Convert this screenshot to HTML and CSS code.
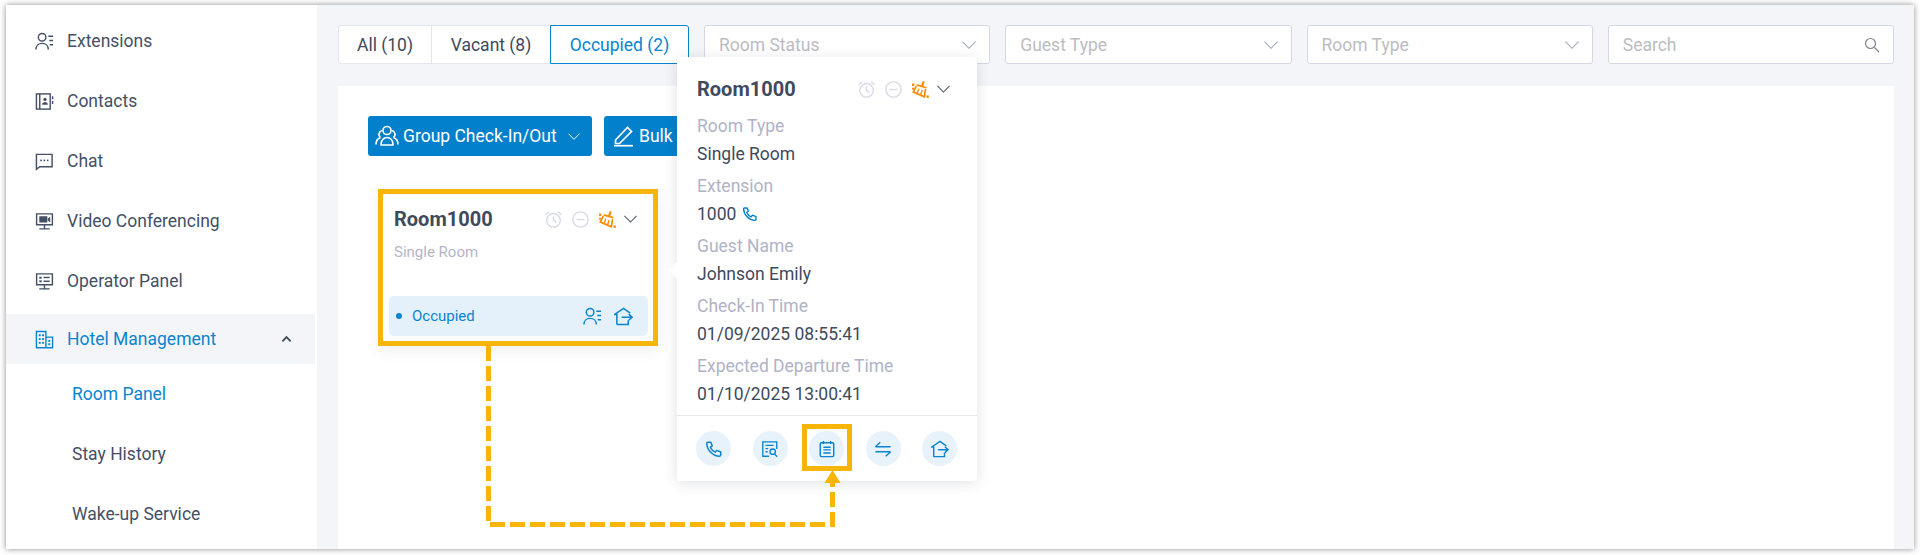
FILE: index.html
```html
<!DOCTYPE html>
<html lang="en">
<head>
<meta charset="utf-8">
<title>Room Panel</title>
<link rel="stylesheet" href="styles.css">
</head>
<body>
<svg class="defs" width="0" height="0" aria-hidden="true">
  <defs>
    <symbol id="i-person" viewBox="0 0 20 20"><g fill="none" stroke="currentColor" stroke-width="1.5"><circle cx="7.500" cy="5.500" r="4"/><path d="M1 18.500c0-4 2.800-6.500 6.500-6.500s6.500 2.500 6.500 6.500"/><path d="M14 4.500h5M15 9h4M15.500 13.500h3.500"/></g></symbol>
    <symbol id="i-logout" viewBox="0 0 20 20"><g fill="none" stroke="currentColor" stroke-width="1.600"><path d="M3 18.500V7.800H.8L10 1.500l7 5"/><path d="M3 18.500h12V14"/><path d="M8 10.800h11M15.500 7.500 19 10.800 15.500 14"/></g></symbol>
    <symbol id="i-phone" viewBox="0 0 20 20"><path fill="none" stroke="currentColor" stroke-width="1.700" stroke-linejoin="round" d="M3 2.500h3.500l1.500 4-2 1.500c1 2.500 3 4.500 5.500 5.500l1.500-2 4.500 1.800v3.200c0 .8-.6 1.500-1.500 1.500C9 18 2 11 2 3.500c0-.5.400-1 1-1z"/></symbol>
    <symbol id="i-alarm" viewBox="0 0 20 20"><g fill="none" stroke="currentColor" stroke-width="1.700"><circle cx="10" cy="11" r="8"/><path d="M10 6.500V11l3.500 2.500M.8 4.500 4.500 1M19.200 4.500 15.500 1"/></g></symbol>
    <symbol id="i-minus" viewBox="0 0 20 20"><g fill="none" stroke="currentColor" stroke-width="1.700"><circle cx="10" cy="10" r="9"/><path d="M5.500 10h9"/></g></symbol>
    <symbol id="i-broom" viewBox="0 0 20 20"><g fill="none" stroke="currentColor"><path stroke-width="2.600" d="M13.800.5 11.800 6"/><path stroke-width="2" d="M5.500 4.500 17 8M5 6 1.500 13l13 5.500L16 9.500"/><path stroke-width="1.600" d="M8 9 6 15M12 10.500l-2 6"/></g><g fill="currentColor"><rect x="0" y="3" width="2.800" height="2.800"/><rect x="0" y="8" width="2.200" height="2.200"/><rect x="17" y="17" width="2.800" height="2.800"/></g></symbol>
    <symbol id="i-chev" viewBox="0 0 14 8"><path fill="none" stroke="currentColor" stroke-width="1.100" d="M.5.700 7 7.300 13.500.7"/></symbol>
  </defs>
</svg>

<div class="frame">
  <nav class="sidebar">
    <a class="nav-item">
      <svg class="nav-icon"><use href="#i-person"/></svg><span>Extensions</span>
    </a>
    <a class="nav-item">
      <svg class="nav-icon" viewBox="0 0 20 20"><g fill="none" stroke="currentColor" stroke-width="1.500"><rect x="1.500" y="2" width="14.500" height="16"/><path d="M5 2v16"/><path d="M18.500 4.500v3M18.500 9.500v3"/></g><circle cx="10.500" cy="7.800" r="1.700" fill="currentColor"/><path fill="currentColor" d="M7.500 13.500c0-2 1.300-3 3-3s3 1 3 3z"/></svg><span>Contacts</span>
    </a>
    <a class="nav-item">
      <svg class="nav-icon" viewBox="0 0 20 20"><path fill="none" stroke="currentColor" stroke-width="1.500" d="M1.500 2.500h16.500v13H5l-3.500 2.800z"/><g fill="currentColor"><rect x="5.500" y="8" width="1.700" height="1.700"/><rect x="9" y="8" width="1.700" height="1.700"/><rect x="12.500" y="8" width="1.700" height="1.700"/></g></svg><span>Chat</span>
    </a>
    <a class="nav-item">
      <svg class="nav-icon" viewBox="0 0 20 20"><path fill="none" stroke="currentColor" stroke-width="1.500" d="M1.700 2h16.600v11.500H1.700zM10 13.500V17M4.500 17.800h11"/><path fill="currentColor" d="M4.500 4.500h8.500v6.500H4.500zM13.500 7l2.500-2v6l-2.500-2z"/></svg><span>Video Conferencing</span>
    </a>
    <a class="nav-item">
      <svg class="nav-icon" viewBox="0 0 20 20"><path fill="none" stroke="currentColor" stroke-width="1.500" d="M1.700 2h16.600v11.500H1.700zM10 13.500V17M4.500 17.800h11"/><g fill="currentColor"><rect x="4.500" y="5" width="2.500" height="2"/><rect x="9" y="5" width="6.500" height="1.500"/><rect x="4.500" y="8.800" width="2.500" height="2"/><rect x="9" y="9" width="6.500" height="1.500"/></g></svg><span>Operator Panel</span>
    </a>
    <a class="nav-item nav-active">
      <svg class="nav-icon" viewBox="0 0 20 20"><g fill="none" stroke="currentColor" stroke-width="1.500"><path d="M1.500 18.500V1.500h10v17M1 18.700h18M11.500 7.500h7v11.200"/></g><g fill="currentColor"><rect x="4" y="4.500" width="2" height="2"/><rect x="7.500" y="4.500" width="2" height="2"/><rect x="4" y="8.500" width="2" height="2"/><rect x="7.500" y="8.500" width="2" height="2"/><rect x="4" y="12.500" width="2" height="2"/><rect x="7.500" y="12.500" width="2" height="2"/><rect x="14" y="10.500" width="2" height="2"/><rect x="14" y="14" width="2" height="2"/></g></svg><span class="nav-label">Hotel Management</span>
      <svg class="nav-caret" viewBox="0 0 12 8"><path fill="none" stroke="currentColor" stroke-width="2" d="M1.500 6.500 6 2l4.500 4.500"/></svg>
    </a>
    <a class="nav-sub nav-sub-active">Room Panel</a>
    <a class="nav-sub">Stay History</a>
    <a class="nav-sub">Wake-up Service</a>
  </nav>

  <main class="content">
    <div class="toolbar">
      <div class="tabs">
        <span class="tab tab-all">All (10)</span>
        <span class="tab tab-vacant">Vacant (8)</span>
        <span class="tab tab-occ">Occupied (2)</span>
      </div>
      <div class="field"><span>Room Status</span><svg class="field-chev"><use href="#i-chev"/></svg></div>
      <div class="field"><span>Guest Type</span><svg class="field-chev"><use href="#i-chev"/></svg></div>
      <div class="field"><span>Room Type</span><svg class="field-chev"><use href="#i-chev"/></svg></div>
      <div class="field"><span>Search</span>
        <svg class="field-search" viewBox="0 0 16 16"><g fill="none" stroke="currentColor" stroke-width="1.200"><circle cx="6.500" cy="6.500" r="5"/><path d="m10.500 10.500 4.500 4.500"/></g></svg>
      </div>
    </div>

    <section class="panel">
      <div class="actions">
        <button class="btn btn-group">
          <svg class="btn-icon" viewBox="0 0 24 22"><g fill="none" stroke="currentColor" stroke-width="1.600"><circle cx="12" cy="5.500" r="4"/><path d="M5.500 12c-2.500-1-2-5.500 1.500-6.500M18.500 12c2.500-1 2-5.500-1.500-6.500"/><path d="M1 19.500c0-3.500 1.800-6 4.500-7M23 19.500c0-3.500-1.800-6-4.500-7"/><path d="M6 20c0-4.500 2.500-7.500 6-7.500s6 3 6 7.500z"/></g></svg>
          <span>Group Check-In/Out</span>
          <svg class="btn-chev"><use href="#i-chev"/></svg>
        </button>
        <button class="btn btn-bulk">
          <svg class="btn-icon" viewBox="0 0 22 22"><g fill="none" stroke="currentColor" stroke-width="1.700"><path d="M2.500 15 14.500 2.500l4 4L6.500 18.500h-4z"/><path d="M1 20.700h19"/></g></svg>
          <span>Bulk Edit</span>
        </button>
      </div>

      <article class="card">
        <header class="room-head">
          <h2 class="room-name">Room1000</h2>
          <svg class="st st-off"><use href="#i-alarm"/></svg>
          <svg class="st st-off"><use href="#i-minus"/></svg>
          <svg class="st st-clean"><use href="#i-broom"/></svg>
          <svg class="st-chev"><use href="#i-chev"/></svg>
        </header>
        <p class="room-type">Single Room</p>
        <div class="status">
          <i class="dot"></i><span class="status-text">Occupied</span>
          <svg class="status-icon"><use href="#i-person"/></svg>
          <svg class="status-icon"><use href="#i-logout"/></svg>
        </div>
      </article>
    </section>
  </main>

  <aside class="popover">
    <header class="room-head pop-head">
      <h2 class="room-name">Room1000</h2>
      <svg class="st st-off"><use href="#i-alarm"/></svg>
      <svg class="st st-off"><use href="#i-minus"/></svg>
      <svg class="st st-clean"><use href="#i-broom"/></svg>
      <svg class="st-chev"><use href="#i-chev"/></svg>
    </header>
    <dl class="facts">
      <dt>Room Type</dt><dd>Single Room</dd>
      <dt>Extension</dt><dd>1000 <svg class="ext-phone"><use href="#i-phone"/></svg></dd>
      <dt>Guest Name</dt><dd>Johnson Emily</dd>
      <dt>Check-In Time</dt><dd>01/09/2025 08:55:41</dd>
      <dt>Expected Departure Time</dt><dd>01/10/2025 13:00:41</dd>
    </dl>
    <footer class="pop-actions">
      <span class="round"><svg class="round-icon"><use href="#i-phone"/></svg></span>
      <span class="round"><svg class="round-icon" viewBox="0 0 20 20"><g fill="none" stroke="currentColor" stroke-width="1.500"><path d="M9 18H2V2h15.500v8"/><path d="M5 6h9M5 9.500h3M5 13h2.500"/><circle cx="13" cy="13" r="3"/><path d="m15 15.500 3 3"/></g></svg></span>
      <span class="round"><svg class="round-icon" viewBox="0 0 20 20"><g fill="none" stroke="currentColor" stroke-width="1.600"><rect x="2.500" y="3" width="15" height="15.500" rx="1.500"/><path d="M6 1v3.500M14 1v3.500M6 8h8M6 11h8M6 14.500h8"/></g></svg></span>
      <span class="round"><svg class="round-icon" viewBox="0 0 20 20"><g fill="none" stroke="currentColor" stroke-width="1.500"><path d="M1.500 7.500h17M1.500 7.500 7 2.500M18.500 13h-17M18.500 13 13 18"/></g></svg></span>
      <span class="round"><svg class="round-icon"><use href="#i-logout"/></svg></span>
    </footer>
  </aside>

  <svg class="annot" width="1908" height="544" viewBox="0 0 1908 544" aria-hidden="true">
    <path class="annot-dash" d="M482.500 341V519.500H826.500V476"/>
    <path class="annot-head" d="M826.500 465l8 13h-16z"/>
    <rect class="annot-box" x="798.500" y="421.500" width="45" height="42"/>
  </svg>
</div>
</body>
</html>
```

FILE: styles.css
```css
* { box-sizing: border-box; }
html, body { margin: 0; height: 100%; }
body { background: #fff; font-family: Roboto, "Liberation Sans", sans-serif; color: #3f4a5c; overflow: hidden; }
.defs { display: block; height: 0; }
button { font: inherit; }
h2, p, dl, dd { margin: 0; }

.frame { position: relative; display: flex; width: 1908px; height: 544px; margin: 5px 0 0 6px; box-shadow: 0 0 6px rgba(0, 0, 0, .45); background: #f4f5f8; }

.sidebar { width: 311px; flex: none; background: #fff; padding: 6px 2px 0 0; display: flex; flex-direction: column; }
.nav-item { display: flex; align-items: center; height: 60px; padding-left: 29px; font-size: 17.500px; color: #445066; }
.nav-icon { width: 19px; height: 19px; margin-right: 13px; flex: none; }
.nav-active { height: 50px; margin-top: 3px; background: #f4f5f8; color: #0a84d0; }
.nav-label { flex: 1; }
.nav-caret { width: 11px; height: 8px; margin-right: 23px; color: #3f4a5c; }
.nav-sub { display: flex; align-items: center; height: 60px; padding-left: 66px; font-size: 17.500px; color: #445066; }
.nav-sub-active { color: #0a84d0; }

.content { flex: 1; min-width: 0; padding: 20px 20px 0 21px; display: flex; flex-direction: column; }
.toolbar { display: flex; height: 39px; gap: 15px; flex: none; }
.tabs { display: flex; width: 351px; flex: none; background: #fff; border-radius: 3px; font-size: 17.500px; }
.tab { display: flex; align-items: center; justify-content: center; border: 1px solid #e3e6ee; }
.tab-all { width: 93px; border-radius: 3px 0 0 3px; border-right: 0; }
.tab-vacant { width: 119px; border-right: 0; }
.tab-occ { width: 139px; border: 1px solid #0a84d0; color: #0a84d0; border-radius: 0 3px 3px 0; }
.field { flex: 1; min-width: 0; display: flex; align-items: center; justify-content: space-between; padding: 0 13px 0 14px; background: #fff; border: 1px solid #d5d8e4; border-radius: 3px; font-size: 17.500px; color: #bcbcc2; }
.field-chev { width: 14px; height: 8px; color: #a8adb8; }
.field-search { width: 16px; height: 16px; color: #7f8590; }

.panel { flex: 1; margin-top: 22px; background: #fff; padding: 30px; min-height: 0; }
.actions { display: flex; gap: 12px; }
.btn { display: flex; align-items: center; height: 40px; border: 0; border-radius: 3px; background: #0280cc; color: #fff; font-size: 17.500px; padding: 0 0 0 7px; }
.btn-group { width: 224px; }
.btn-bulk { width: 130px; padding-left: 8px; }
.btn-icon { width: 24px; height: 22px; margin-right: 4px; flex: none; }
.btn-bulk .btn-icon { margin-right: 3px; }
.btn-chev { width: 12px; height: 7px; margin-left: 11px; }

.card { width: 280px; height: 157px; margin: 33px 0 0 10px; border: 5px solid #f8b509; background: #fff; padding: 11px 5px 0 6px; display: flex; flex-direction: column; box-shadow: 0 4px 14px rgba(40, 50, 70, .08); }
.room-head { display: flex; align-items: center; padding-left: 5px; padding-right: 1px; height: 28px; }
.room-name { flex: 1; font-size: 20px; font-weight: 700; color: #3f4a5c; }
.st { width: 17px; height: 17px; margin-right: 10px; flex: none; }
.st-off { color: #d8dae6; }
.st-clean { color: #ff8a00; margin-right: 8px; }
.st-chev { width: 13px; height: 8px; color: #4a5568; margin-right: 10px; flex: none; }
.room-type { padding: 10px 0 0 5px; font-size: 15px; color: #b4b6c8; flex: 1; }
.status { display: flex; align-items: center; height: 40px; margin-bottom: 5px; padding: 0 15px 0 7px; background: #e4f1fa; border-radius: 5px; color: #0a84d0; font-size: 15px; }
.dot { width: 6px; height: 6px; border-radius: 50%; background: #0a84d0; margin-right: 10px; }
.status-text { flex: 1; }
.status-icon { width: 19px; height: 19px; margin-left: 12px; flex: none; }

.popover { position: absolute; left: 671px; top: 52px; width: 300px; height: 424px; padding: 18px 0 0; background: #fff; border-radius: 3px; box-shadow: 0 2px 14px rgba(40, 50, 70, .14); display: flex; flex-direction: column; }
.popover::before { content: ""; position: absolute; left: -6px; top: 207px; width: 12px; height: 12px; background: #fff; transform: rotate(45deg); }
.pop-head { padding-left: 20px; padding-right: 17px; position: relative; }
.facts { padding: 9px 20px 0; flex: 1; font-size: 17.500px; line-height: 28px; position: relative; }
.facts dt { height: 28px; color: #b0b3c6; }
.facts dd { height: 28px; margin-bottom: 4px; color: #3f4a5c; display: flex; align-items: center; gap: 6px; }
.ext-phone { width: 16px; height: 16px; color: #0280cc; }
.pop-actions { height: 66px; flex: none; border-top: 1px solid #e6e8ee; display: flex; align-items: center; padding: 0 20px 0 19px; justify-content: space-between; }
.round { width: 35px; height: 35px; border-radius: 50%; background: #e8f2fb; display: flex; align-items: center; justify-content: center; color: #0a84d0; }
.round-icon { width: 18px; height: 18px; }

.annot { position: absolute; left: 0; top: 0; pointer-events: none; }
.annot-dash { fill: none; stroke: #f8b509; stroke-width: 5; stroke-dasharray: 15 5; }
.annot-head { fill: #f8b509; }
.annot-box { fill: none; stroke: #f8b509; stroke-width: 5; }
```
